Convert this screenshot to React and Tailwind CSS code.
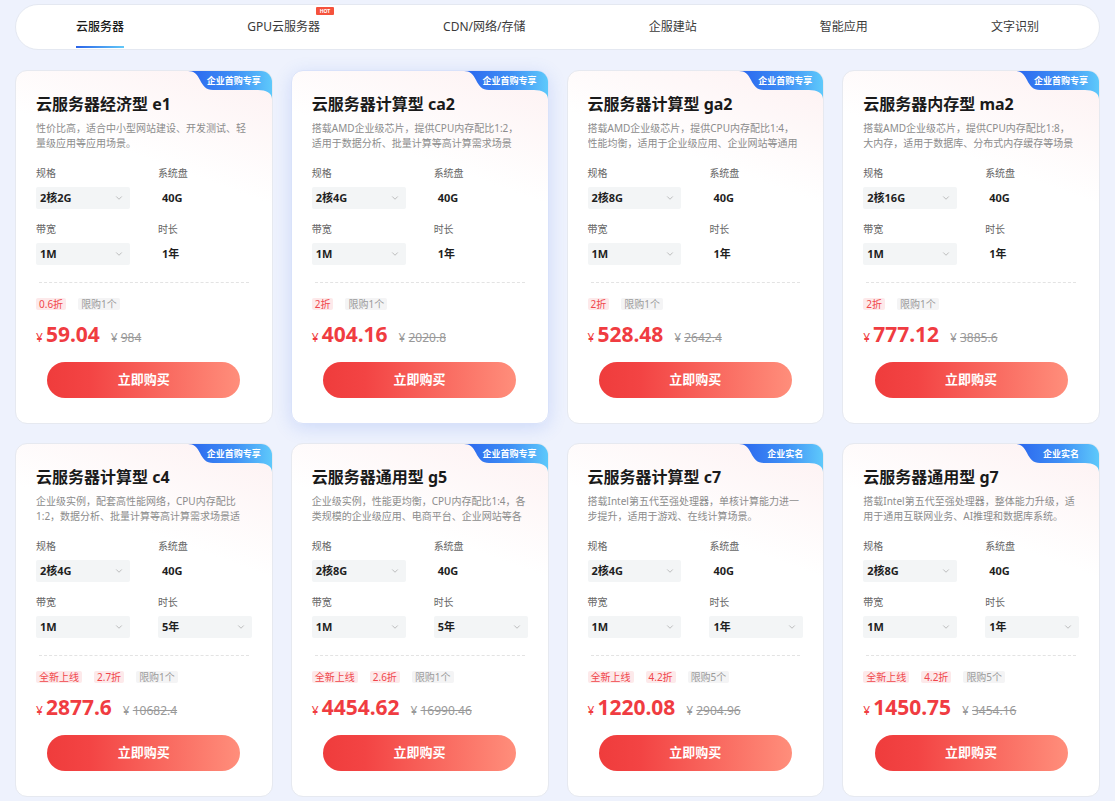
import { ChevronDown } from "lucide-react";

const TABS = ["云服务器", "GPU云服务器", "CDN/网络/存储", "企服建站", "智能应用", "文字识别"];

const CARDS = [
  {
    name: "云服务器经济型 e1",
    desc: ["性价比高，适合中小型网站建设、开发测试、轻", "量级应用等应用场景。"],
    spec: "2核2G",
    bw: "1M",
    dur: "1年",
    durSelect: false,
    tags: ["0.6折"],
    limit: "限购1个",
    price: "59.04",
    old: "984",
    badge: "企业首购专享",
  },
  {
    name: "云服务器计算型 ca2",
    desc: ["搭载AMD企业级芯片，提供CPU内存配比1:2，", "适用于数据分析、批量计算等高计算需求场景"],
    spec: "2核4G",
    bw: "1M",
    dur: "1年",
    durSelect: false,
    tags: ["2折"],
    limit: "限购1个",
    price: "404.16",
    old: "2020.8",
    badge: "企业首购专享",
    active: true,
  },
  {
    name: "云服务器计算型 ga2",
    desc: ["搭载AMD企业级芯片，提供CPU内存配比1:4，", "性能均衡，适用于企业级应用、企业网站等通用"],
    spec: "2核8G",
    bw: "1M",
    dur: "1年",
    durSelect: false,
    tags: ["2折"],
    limit: "限购1个",
    price: "528.48",
    old: "2642.4",
    badge: "企业首购专享",
  },
  {
    name: "云服务器内存型 ma2",
    desc: ["搭载AMD企业级芯片，提供CPU内存配比1:8，", "大内存，适用于数据库、分布式内存缓存等场景"],
    spec: "2核16G",
    bw: "1M",
    dur: "1年",
    durSelect: false,
    tags: ["2折"],
    limit: "限购1个",
    price: "777.12",
    old: "3885.6",
    badge: "企业首购专享",
  },
  {
    name: "云服务器计算型 c4",
    desc: ["企业级实例，配套高性能网络，CPU内存配比", "1:2，数据分析、批量计算等高计算需求场景适"],
    spec: "2核4G",
    bw: "1M",
    dur: "5年",
    durSelect: true,
    tags: ["全新上线", "2.7折"],
    limit: "限购1个",
    price: "2877.6",
    old: "10682.4",
    badge: "企业首购专享",
  },
  {
    name: "云服务器通用型 g5",
    desc: ["企业级实例，性能更均衡，CPU内存配比1:4，各", "类规模的企业级应用、电商平台、企业网站等各"],
    spec: "2核8G",
    bw: "1M",
    dur: "5年",
    durSelect: true,
    tags: ["全新上线", "2.6折"],
    limit: "限购1个",
    price: "4454.62",
    old: "16990.46",
    badge: "企业首购专享",
  },
  {
    name: "云服务器计算型 c7",
    desc: ["搭载Intel第五代至强处理器，单核计算能力进一", "步提升，适用于游戏、在线计算场景。"],
    spec: "2核4G",
    bw: "1M",
    dur: "1年",
    durSelect: true,
    tags: ["全新上线", "4.2折"],
    limit: "限购5个",
    price: "1220.08",
    old: "2904.96",
    badge: "企业实名",
  },
  {
    name: "云服务器通用型 g7",
    desc: ["搭载Intel第五代至强处理器，整体能力升级，适", "用于通用互联网业务、AI推理和数据库系统。"],
    spec: "2核8G",
    bw: "1M",
    dur: "1年",
    durSelect: true,
    tags: ["全新上线", "4.2折"],
    limit: "限购5个",
    price: "1450.75",
    old: "3454.16",
    badge: "企业实名",
  },
];

function Badge({ text, id }) {
  return (
    <div className="absolute top-0 right-0 w-[84px] h-[28px]">
      <svg width="84" height="28" viewBox="0 0 84 28" className="absolute inset-0">
        <defs>
          <linearGradient id={id} x1="0" y1="0" x2="1" y2="0">
            <stop offset="0" stopColor="#2a66ee" />
            <stop offset="0.55" stopColor="#3f8ff5" />
            <stop offset="1" stopColor="#5ec9fb" />
          </linearGradient>
        </defs>
        <path
          d="M0 0 C6 0 9 3 12 9 C15 15 18 19 25 19 H70 C78 19 84 22 84 28 V0 Z"
          fill={`url(#${id})`}
        />
      </svg>
      <div className="absolute top-0 left-0 w-[84px] h-[19px] pl-[8px] flex items-center justify-center text-[9px] font-bold text-white leading-none">
        {text}
      </div>
    </div>
  );
}

function SelectBox({ value }) {
  return (
    <div className="h-[22px] bg-[#f3f5f6] rounded-[2px] pl-[4px] pr-[6px] flex items-center justify-between">
      <span className="text-[11px] font-bold text-[#1f1f1f]">{value}</span>
      <ChevronDown size={10} strokeWidth={1.5} className="text-[#9a9a9a]" />
    </div>
  );
}

function StaticValue({ value }) {
  return (
    <div className="h-[22px] pl-[4px] flex items-center text-[11px] font-bold text-[#1f1f1f]">
      {value}
    </div>
  );
}

function ProductCard({ card, idx }) {
  return (
    <div
      className={`relative h-[354px] rounded-[12px] overflow-hidden border px-[20px] pt-[21px] bg-[linear-gradient(200deg,#fdf1f2_0%,#ffffff_30%)] ${
        card.active
          ? "border-[#d9e2fa] shadow-[0_4px_18px_rgba(60,110,235,0.18)]"
          : "border-[#e6e9f0]"
      }`}
    >
      <Badge text={card.badge} id={`badge-grad-${idx}`} />

      <h3 className="text-[16px] leading-[24px] font-bold text-[#1a1a1a]">{card.name}</h3>

      <div className="mt-[5px] h-[30px] overflow-hidden text-[10px] leading-[15px] text-[#8c8c8c]">
        {card.desc.map((line) => (
          <div key={line} className="whitespace-nowrap">
            {line}
          </div>
        ))}
      </div>

      {/* spec grid */}
      <div className="mt-[15px] grid grid-cols-2 gap-x-[28px]">
        <div>
          <p className="text-[10px] leading-[14px] text-[#666]">规格</p>
          <div className="mt-[7px]">
            <SelectBox value={card.spec} />
          </div>
        </div>
        <div>
          <p className="text-[10px] leading-[14px] text-[#666]">系统盘</p>
          <div className="mt-[7px]">
            <StaticValue value="40G" />
          </div>
        </div>
        <div className="mt-[13px]">
          <p className="text-[10px] leading-[14px] text-[#666]">带宽</p>
          <div className="mt-[7px]">
            <SelectBox value={card.bw} />
          </div>
        </div>
        <div className="mt-[13px]">
          <p className="text-[10px] leading-[14px] text-[#666]">时长</p>
          <div className="mt-[7px]">
            {card.durSelect ? <SelectBox value={card.dur} /> : <StaticValue value={card.dur} />}
          </div>
        </div>
      </div>

      <div className="mt-[17px] mx-[3px] border-t border-dashed border-[#e3e3e3]" />

      {/* tags */}
      <div className="mt-[15px] flex items-center gap-[12px]">
        {card.tags.map((t) => (
          <span
            key={t}
            className="h-[12px] px-[3px] rounded-[2px] bg-[#fde9ea] text-[#f0464b] text-[10px] leading-[12px]"
          >
            {t}
          </span>
        ))}
        <span className="h-[12px] px-[3px] rounded-[2px] bg-[#f4f4f5] text-[#9a9a9a] text-[10px] leading-[12px]">
          {card.limit}
        </span>
      </div>

      {/* price */}
      <div className="mt-[10px] h-[28px] flex items-baseline">
        <span className="text-[12px] text-[#f03c41] mr-[3px]">¥</span>
        <span className="text-[21px] leading-[28px] font-bold text-[#f03c41]">{card.price}</span>
        <span className="ml-[11px] text-[12px] text-[#999]">¥</span>
        <span className="ml-[3px] text-[12px] text-[#999] line-through">{card.old}</span>
      </div>

      <div className="mt-[14px] flex justify-center">
        <button className="w-[193px] h-[36px] rounded-full bg-[linear-gradient(90deg,#ef3c3c_0%,#f34444_22%,#ff8e7b_100%)] text-white text-[13px] font-bold">
          立即购买
        </button>
      </div>
    </div>
  );
}

export default function App() {
  return (
    <div className="min-h-screen bg-[#eef2fd] px-[15px] pt-[4px] font-['Noto_Sans','Noto_Sans_CJK_SC',sans-serif]">
      {/* Top tabs */}
      <nav className="h-[46px] bg-white rounded-full border border-[#e4e8f1] px-[60px] flex items-center justify-between">
        {TABS.map((tab, i) => (
          <div key={tab} className="relative h-full flex items-center">
            <span
              className={`text-[12px] ${
                i === 0 ? "text-[#1a1a1a] font-medium" : "text-[#3a3a3a]"
              }`}
            >
              {tab}
            </span>
            {i === 0 && (
              <span className="absolute left-0 right-0 bottom-[1px] h-[2px] bg-[linear-gradient(90deg,#2a63e8,#62c8f8)]" />
            )}
            {tab === "GPU云服务器" && (
              <span className="absolute -right-[14px] top-[2px] w-[18px] h-[8px] rounded-[1px] bg-[#f5523c] text-white text-[5px] leading-[8px] text-center font-bold">
                HOT
              </span>
            )}
          </div>
        ))}
      </nav>

      {/* Product grid */}
      <div className="mt-[20px] grid grid-cols-4 gap-x-[18px] gap-y-[19px]">
        {CARDS.map((card, i) => (
          <ProductCard key={card.name} card={card} idx={i} />
        ))}
      </div>
    </div>
  );
}
